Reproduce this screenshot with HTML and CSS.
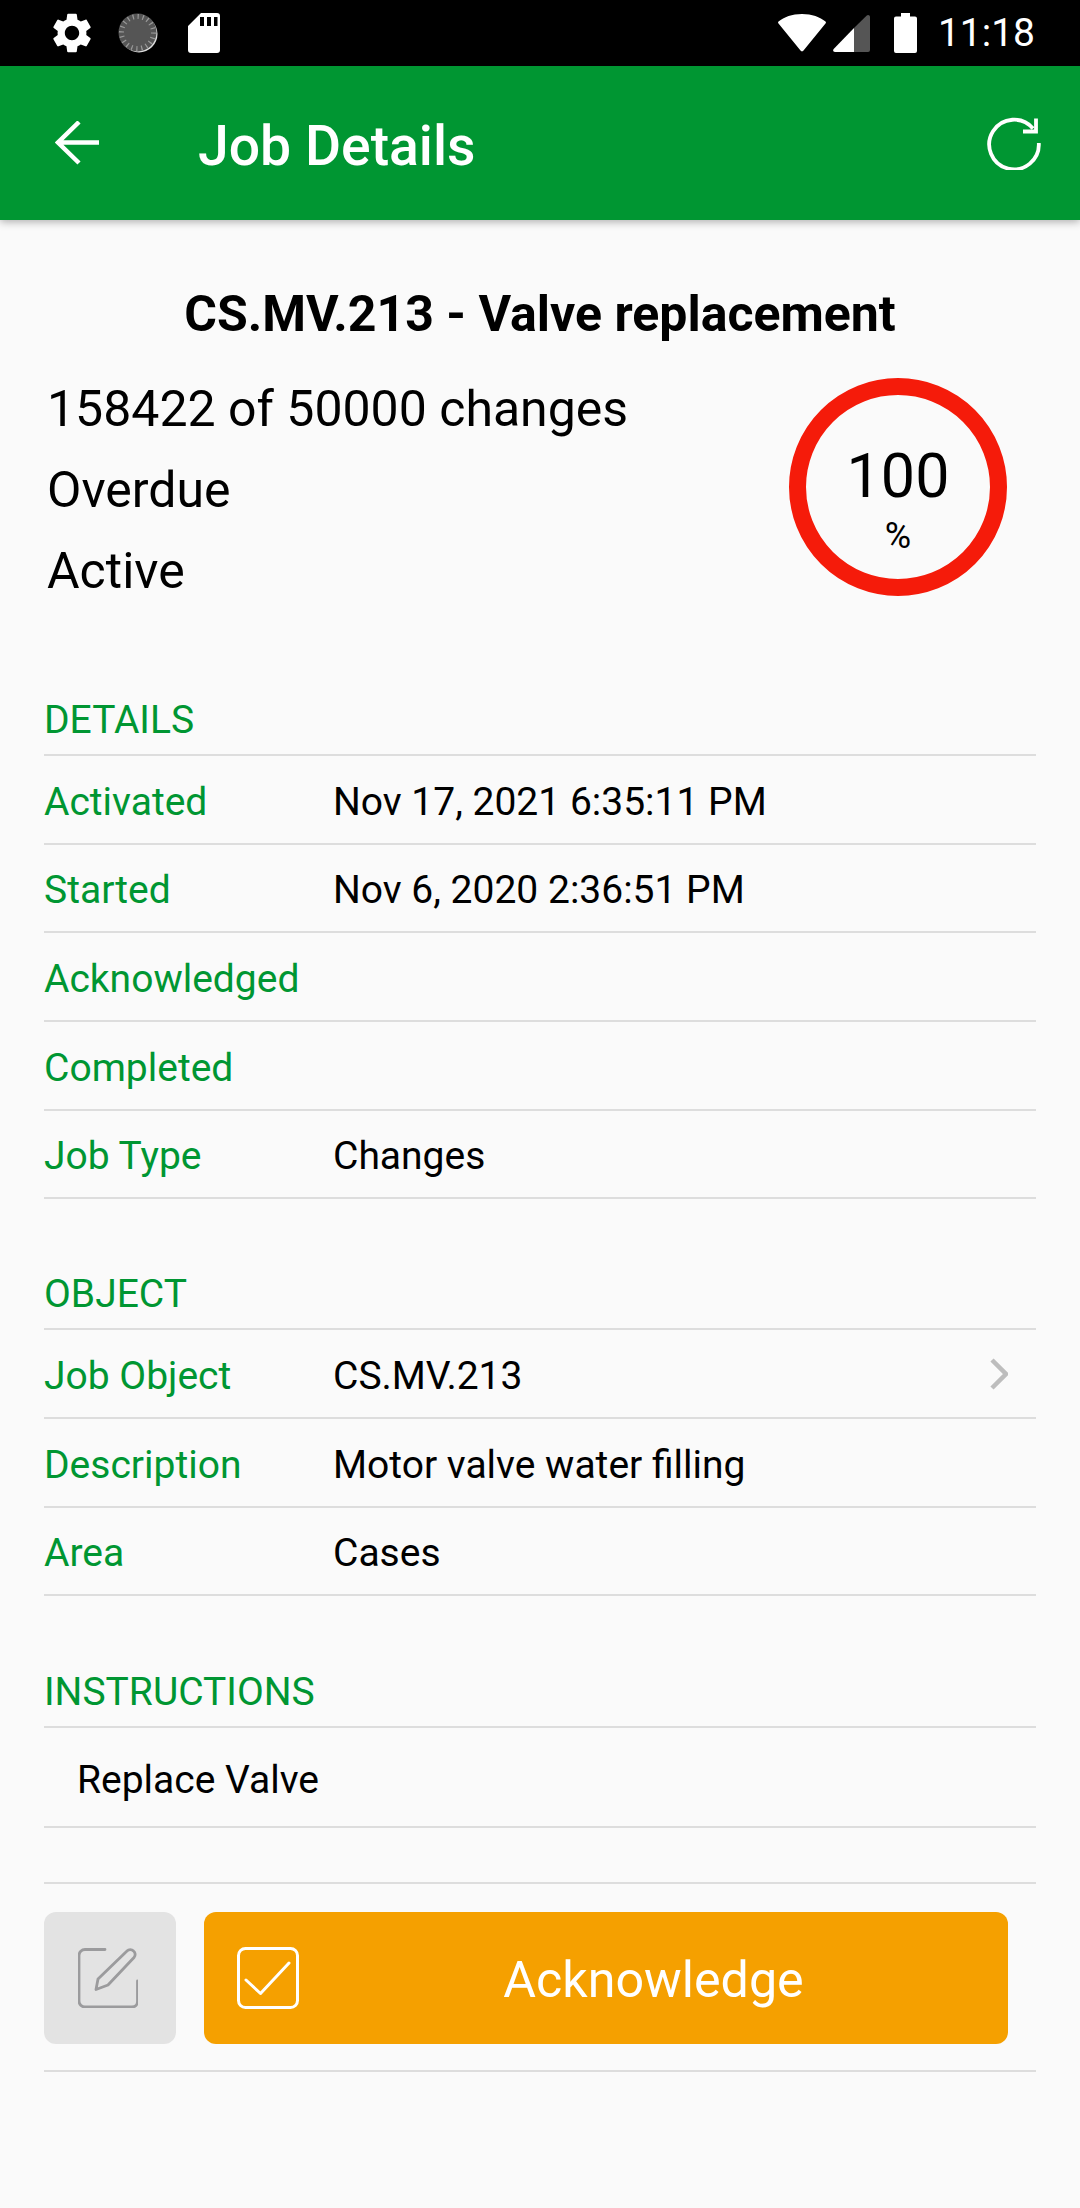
FILE: index.html
```html
<!DOCTYPE html>
<html lang="en">
<head>
<meta charset="utf-8">
<title>Job Details</title>
<link rel="stylesheet" href="styles.css">
</head>
<body>
<div class="status">
  <div class="status-left">
    <svg class="ic-gear" viewBox="0 0 24 24"><path fill="#fff" d="M19.14 12.94c.04-.3.06-.61.06-.94 0-.32-.02-.64-.07-.94l2.03-1.58c.18-.14.23-.41.12-.61l-1.92-3.32c-.12-.22-.37-.29-.59-.22l-2.39.96c-.5-.38-1.03-.7-1.62-.94l-.36-2.54c-.04-.24-.24-.41-.48-.41h-3.84c-.24 0-.43.17-.47.41l-.36 2.54c-.59.24-1.13.57-1.62.94l-2.39-.96c-.22-.08-.47 0-.59.22L2.74 8.87c-.12.21-.08.47.12.61l2.03 1.58c-.05.3-.09.63-.09.94s.02.64.07.94l-2.03 1.58c-.18.14-.23.41-.12.61l1.92 3.32c.12.22.37.29.59.22l2.39-.96c.5.38 1.03.7 1.62.94l.36 2.54c.05.24.24.41.48.41h3.84c.24 0 .44-.17.47-.41l.36-2.54c.59-.24 1.13-.56 1.62-.94l2.39.96c.22.08.47 0 .59-.22l1.92-3.32c.12-.22.07-.47-.12-.61l-2.01-1.58zM12 15.6c-1.98 0-3.6-1.62-3.6-3.6s1.62-3.6 3.6-3.6 3.6 1.62 3.6 3.6-1.62 3.6-3.6 3.6z"/></svg>
    <svg class="ic-disc" viewBox="0 0 40 40">
      <circle cx="21" cy="21" r="18.500" fill="#ddd"/>
      <circle cx="19.500" cy="19.500" r="19" fill="#555"/>
      <circle cx="19.500" cy="19.500" r="16" fill="none" stroke="#9a9a9a" stroke-width="5" stroke-dasharray="1.200 3.800"/>
    </svg>
    <svg class="ic-sd" viewBox="0 0 32 40"><path fill="#fff" fill-rule="evenodd" d="M13 0h16a3 3 0 0 1 3 3v34a3 3 0 0 1-3 3H3a3 3 0 0 1-3-3V13zM12 4v9h4V4zM19 4v9h4V4zM26 4v9h3.500V4z"/></svg>
  </div>
  <div class="status-right">
    <svg class="ic-wifi" viewBox="0 0 48 38"><path fill="#fff" d="M24 0C14 0 6 3 .500 7.500a1.500 1.500 0 0 0 0 2L22.500 36.500a2 2 0 0 0 3 0L47.500 9.500a1.500 1.500 0 0 0 0-2C42 3 34 0 24 0z"/></svg>
    <svg class="ic-signal" viewBox="0 0 37 37"><path fill="#555" d="M21 13 33.500.7C35 -.6 37 .2 37 2v33a2 2 0 0 1-2 2H21z"/><path fill="#fff" d="M21 13v24H2C.3 37-.5 35.300.7 34z"/></svg>
    <svg class="ic-batt" viewBox="0 0 23 40"><path fill="#fff" d="M7 0h9v3.500h5a2 2 0 0 1 2 2V38a2 2 0 0 1-2 2H2a2 2 0 0 1-2-2V5.500a2 2 0 0 1 2-2h5z"/></svg>
    <span class="clock">11:18</span>
  </div>
</div>

<header class="appbar">
  <svg class="ic-back" viewBox="0 0 44 44"><path fill="none" stroke="#fff" stroke-width="4.500" d="M44 21.500H3M24 1 3 21.500 24 42"/></svg>
  <h1 class="appbar-title">Job Details</h1>
  <svg class="ic-refresh" viewBox="0 0 54 54"><path fill="none" stroke="#fff" stroke-width="3.800" d="M46 12.500A24.800 24.800 0 1 0 51.800 27"/><path fill="none" stroke="#fff" stroke-width="3.800" d="M49 2.500V15.500H36"/></svg>
</header>

<main class="content">
  <h2 class="job-title">CS.MV.213 - Valve replacement</h2>
  <section class="summary">
    <div class="summary-lines">
      <p>158422 of 50000 changes</p>
      <p>Overdue</p>
      <p>Active</p>
    </div>
    <div class="gauge">
      <span class="gauge-value">100</span>
      <span class="gauge-unit">%</span>
    </div>
  </section>

  <section class="group group-details">
    <h3 class="group-head">DETAILS</h3>
    <div class="row"><span class="key">Activated</span><span class="val">Nov 17, 2021 6:35:11 PM</span></div>
    <div class="row"><span class="key">Started</span><span class="val">Nov 6, 2020 2:36:51 PM</span></div>
    <div class="row"><span class="key">Acknowledged</span><span class="val"></span></div>
    <div class="row"><span class="key">Completed</span><span class="val"></span></div>
    <div class="row"><span class="key">Job Type</span><span class="val">Changes</span></div>
  </section>

  <section class="group group-object">
    <h3 class="group-head">OBJECT</h3>
    <div class="row"><span class="key">Job Object</span><span class="val">CS.MV.213</span>
      <svg class="ic-chev" viewBox="0 0 18 32"><path fill="none" stroke="#bdbdbd" stroke-width="4.500" d="M2 2l14 14L2 30"/></svg>
    </div>
    <div class="row"><span class="key">Description</span><span class="val">Motor valve water filling</span></div>
    <div class="row"><span class="key">Area</span><span class="val">Cases</span></div>
  </section>

  <section class="group group-instr">
    <h3 class="group-head">INSTRUCTIONS</h3>
    <div class="instr">Replace Valve</div>
  </section>

  <section class="actions">
    <button class="btn-edit" type="button">
      <svg class="ic-edit" viewBox="0 0 60 60"><path fill="none" stroke="#9b9b9d" stroke-width="2.800" stroke-linecap="round" stroke-linejoin="round" d="M27 1.500H7a6 6 0 0 0-6 6V53a6 6 0 0 0 6 6h47a5.500 5.500 0 0 0 5.500-5.500V33"/><path fill="none" stroke="#9b9b9d" stroke-width="2.800" stroke-linejoin="round" d="M20 31 49 3a4.500 4.500 0 0 1 6.500 0 4.500 4.500 0 0 1 .5 6.500L30 37l-12 4.500z"/></svg>
    </button>
    <button class="btn-ack" type="button">
      <svg class="ic-check" viewBox="0 0 62 62"><rect x="1.500" y="1.500" width="59" height="59" rx="7" fill="none" stroke="#fff" stroke-width="3"/><path fill="none" stroke="#fff" stroke-width="3" stroke-linecap="round" stroke-linejoin="round" d="M9 33l14.500 13.500L52 16"/></svg>
      <span class="btn-ack-label">Acknowledge</span>
    </button>
  </section>
</main>
</body>
</html>
```

FILE: styles.css
```css
* { box-sizing: border-box; }
html, body { margin: 0; padding: 0; }
body {
  width: 1080px;
  height: 2208px;
  background: #fafafa;
  font-family: Roboto, "Liberation Sans", sans-serif;
  color: #000;
  overflow: hidden;
}
.status {
  height: 66px;
  background: #000;
  display: flex;
  justify-content: space-between;
  align-items: center;
}
.status-left { display: flex; align-items: center; padding-left: 48px; }
.ic-gear { width: 48px; height: 48px; display: block; }
.ic-disc { width: 40px; height: 40px; margin-left: 22px; display: block; }
.ic-sd { width: 32px; height: 40px; margin-left: 30px; display: block; }
.status-right { display: flex; align-items: center; padding-right: 45px; }
.ic-wifi { width: 48px; height: 38px; display: block; }
.ic-signal { width: 37px; height: 37px; margin-left: 7px; display: block; }
.ic-batt { width: 23px; height: 40px; margin-left: 24px; display: block; }
.clock { font-size: 39px; color: #fff; margin-left: 21px; line-height: 40px; }

.appbar {
  height: 154px;
  background: #009632;
  display: flex;
  align-items: center;
  box-shadow: 0 2px 8px rgba(0,0,0,.3);
  position: relative;
  color: #fff;
}
.ic-back { width: 44px; height: 44px; margin-left: 55px; display: block; }
.appbar-title { margin: 7px 0 0 99px; font-size: 55.3px; font-weight: 500; line-height: 64px; flex: 1; }
.ic-refresh { width: 54px; height: 54px; margin-right: 39px; display: block; }

.content { padding: 0 44px; }
.job-title { margin: 66px 0 0; text-align: center; font-size: 50px; font-weight: 700; line-height: 56px; }
.summary { display: flex; justify-content: space-between; margin-top: 26px; height: 242px; }
.summary-lines { padding-top: 1px; }
.summary-lines p { margin: 0; font-size: 50px; line-height: 81px; padding-left: 3px; }
.gauge {
  width: 218px;
  height: 218px;
  border: 17px solid #f51b0a;
  border-radius: 50%;
  margin: 10px 29px 0 0;
  display: flex;
  flex-direction: column;
  align-items: center;
  justify-content: center;
}
.gauge-value { font-size: 61px; line-height: 70px; margin-top: 21px; }
.gauge-unit { font-size: 36px; line-height: 38px; margin-top: 6px; }

.group { width: 992px; }
.group-details { margin-top: 81px; }
.group-object { margin-top: 66px; }
.group-instr { margin-top: 67px; }
.group-head {
  margin: 0;
  height: 65px;
  padding-top: 7px;
  font-size: 39px;
  font-weight: 400;
  line-height: 44px;
  color: #009632;
  border-bottom: 2px solid #ddd;
}
.row {
  height: 88.67px;
  display: flex;
  align-items: center;
  padding-top: 5px;
  border-bottom: 2px solid #ddd;
  font-size: 39px;
}
.key { width: 289px; color: #009632; flex: none; }
.val { flex: 1; }
.ic-chev { width: 18px; height: 32px; margin: -5px 28px 0 0; display: block; }
.instr {
  height: 100px;
  padding: 5px 0 0 33px;
  display: flex;
  align-items: center;
  font-size: 39px;
  border-bottom: 2px solid #ddd;
}
.actions {
  width: 992px;
  margin-top: 54px;
  height: 190px;
  padding-top: 28px;
  display: flex;
  gap: 28px;
  border-top: 2px solid #ddd;
  border-bottom: 2px solid #ddd;
}
.btn-edit, .btn-ack { height: 132px; border: 0; border-radius: 12px; padding: 0; font-family: inherit; }
.btn-edit {
  width: 132px;
  background: #e3e3e3;
  display: flex;
  align-items: center;
  justify-content: center;
}
.ic-edit { width: 60px; height: 60px; margin-right: 5px; display: block; }
.btn-ack {
  width: 804px;
  background: #f5a000;
  color: #fff;
  display: flex;
  align-items: center;
}
.ic-check { width: 62px; height: 62px; margin-left: 33px; display: block; flex: none; }
.btn-ack-label { flex: 1; text-align: center; font-size: 50.2px; padding-top: 3px; }
```
